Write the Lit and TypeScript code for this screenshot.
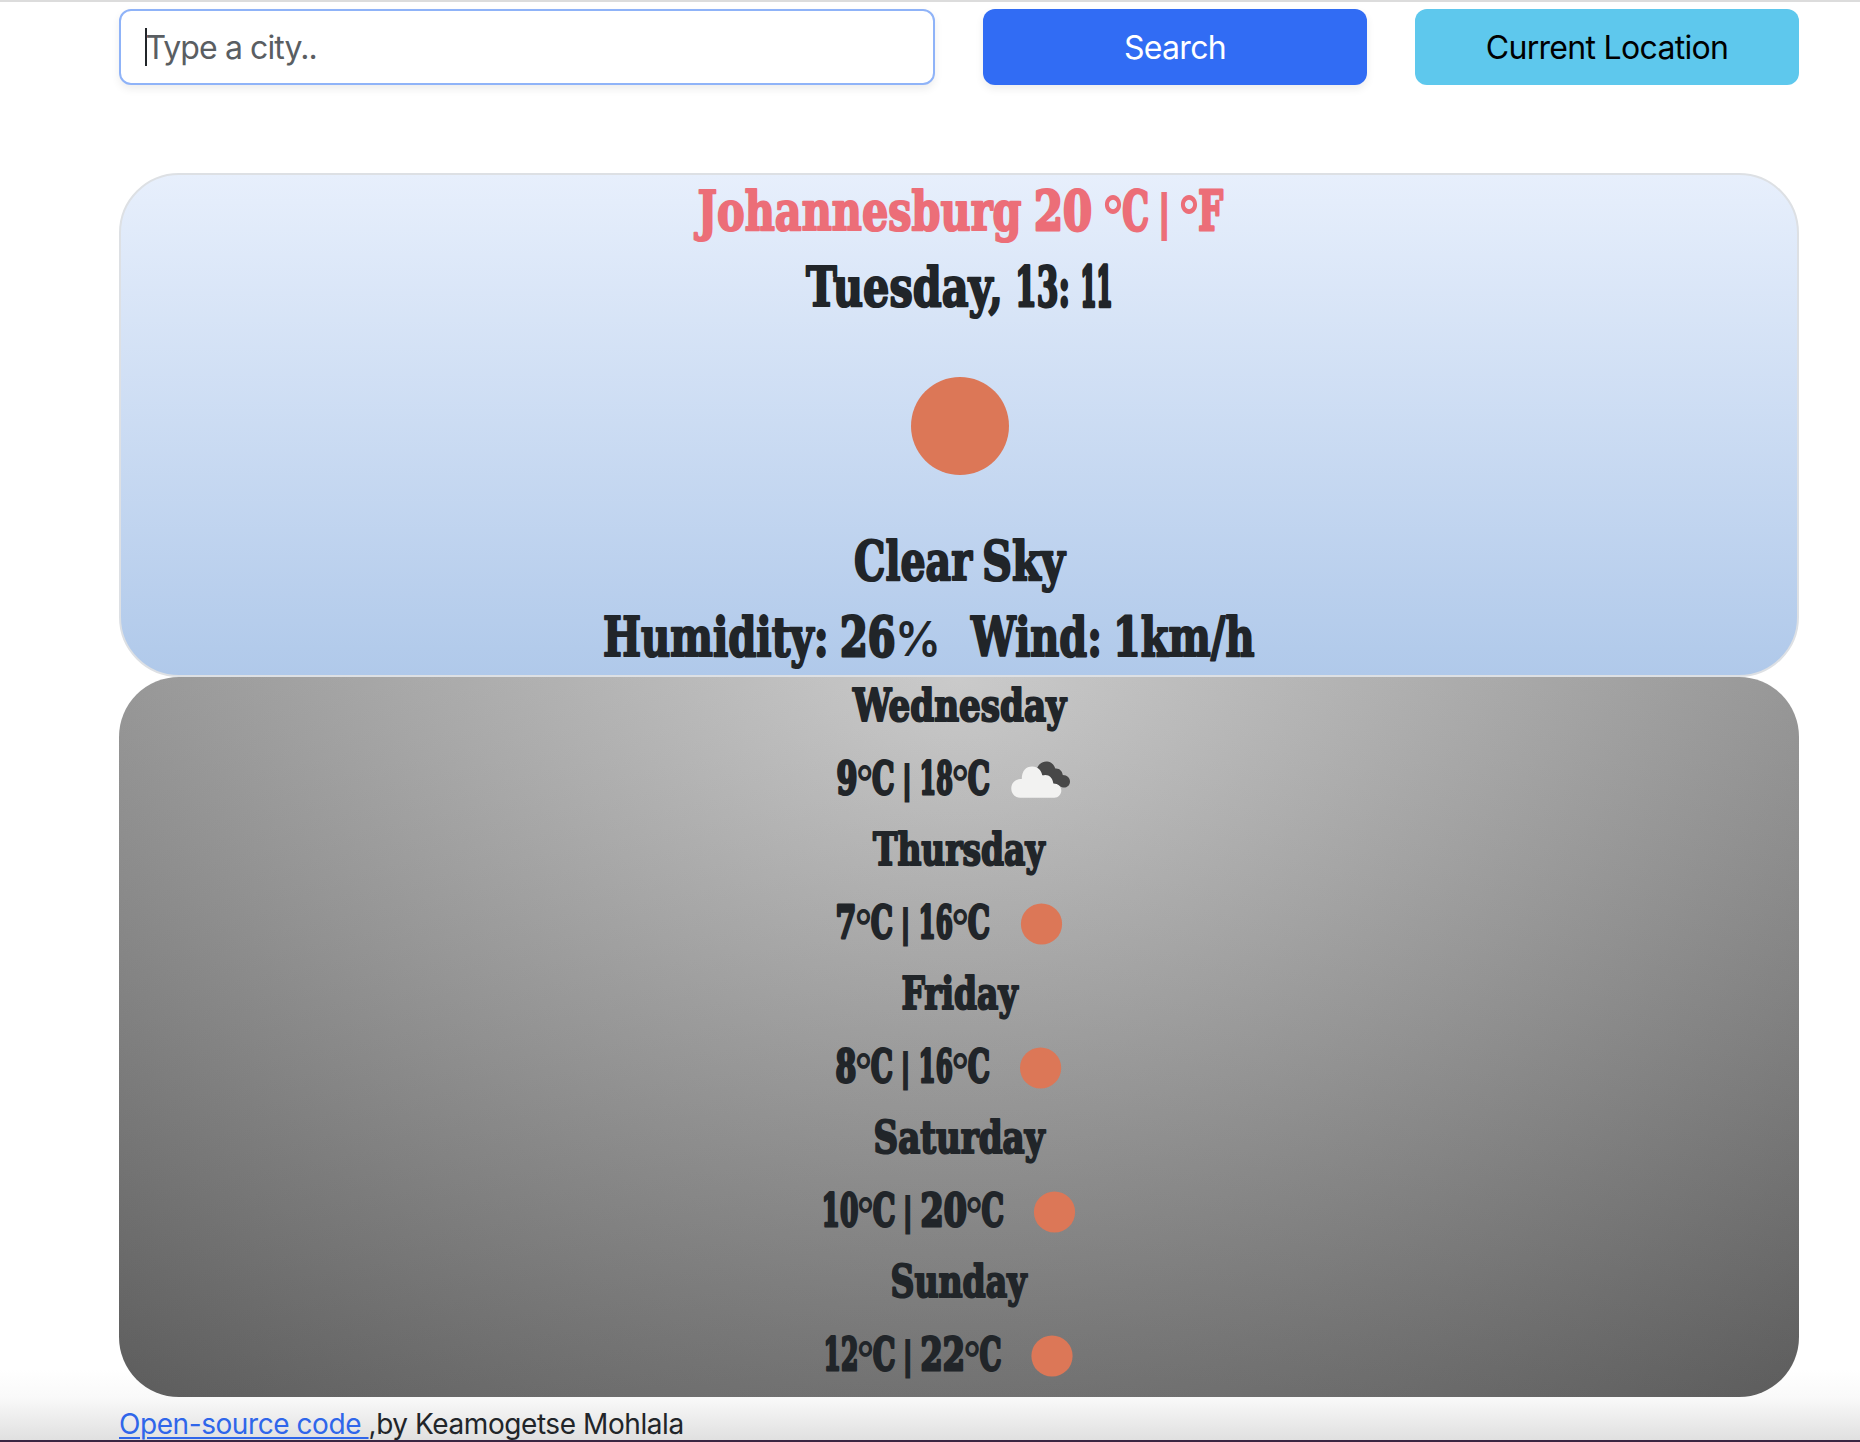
import { LitElement, html, svg, css } from "lit";
import { customElement, property } from "lit/decorators.js";

/** A run of display lettering: text, start, end (relative to the line's centre), and face. */
type Run = [string, number, number, ("sans" | "ring" | "bar")?];

@customElement("display-line")
class DisplayLine extends LitElement {
  @property({ attribute: false }) runs: Run[] = [];
  @property({ type: Number }) size = 55;
  @property({ type: Number }) height = 75;
  @property({ type: Number }) baseline = 55;
  @property() icon = "";
  @property({ type: Number }) iconX = 0;

  static styles = css`
    :host { display: block; }
    svg { display: block; width: 100%; overflow: visible; }
    text { font-family: "DejaVu Serif", serif; font-weight: 700; fill: currentColor; stroke: currentColor; stroke-width: 2.2px; stroke-linejoin: round; }
    .narrow { stroke-width: 3px; }
    .ones { stroke-width: 4.5px; }
    .sans { font-family: Inter, sans-serif; font-weight: 600; stroke: none; }
    .ring { font-weight: 500; }
    .bar { font-weight: 900; }
  `;

  private run([t, a, b, face]: Run) {
    const small = this.size < 50;
    if (face === "ring")
      return svg`<tspan class="sans ring" x=${a - 2} y=${this.baseline + (small ? 5 : 7)} font-size=${small ? 46 : 58} textLength=${b - a + 4} lengthAdjust="spacingAndGlyphs">${t}</tspan>`;
    if (face === "bar")
      return svg`<tspan class="sans bar" x=${a - 3} y=${this.baseline + (small ? 0.5 : 1)} font-size=${small ? 33 : 41} textLength=${b - a + 6} lengthAdjust="spacingAndGlyphs">${t}</tspan>`;
    if (face === "sans")
      return svg`<tspan class="sans" x=${a - 2} y=${this.baseline} font-size="48" textLength=${b - a + 4} lengthAdjust="spacingAndGlyphs">${t}</tspan>`;
    const cls = t === "11" ? "ones" : /^(\d+:?|C|F)$/.test(t) ? "narrow" : "";
    return svg`<tspan class=${cls} x=${a} y=${this.baseline} font-size=${this.size} textLength=${b - a} lengthAdjust="spacingAndGlyphs">${t}</tspan>`;
  }

  private glyph() {
    if (this.icon === "sun")
      return svg`<circle cx=${this.iconX} cy=${this.baseline - 14} r="20.6" fill="#dc7757"></circle>`;
    if (this.icon === "clouds")
      return svg`<g transform=${`translate(${this.iconX} ${this.baseline - 33})`}>
        <path fill="#484848" d="M25 9C27 3 31 0 36 0.500C40 1 43 4 44 7.500C48 7 51 10 51.500 14C56 14 58.700 17 58.700 20.500C58.700 24.500 55.500 27 51.500 26.500L40 22Z"></path>
        <path fill="#f2f2f1" d="M9 36.700C4 36.700 0 33 0 27.500C0 22 4 18 10.500 18C10.500 10 14.500 5.500 21 5.500C26.500 5.500 30 9 31 14.500C36 12.500 41.500 15.500 42 22.500C47 22.500 50 25.500 50 29.500C50 33.500 47 36.700 43 36.700Z"></path>
      </g>`;
    return "";
  }

  render() {
    return html`<svg viewBox=${`-840 0 1680 ${this.height}`} height=${this.height}>
      <text>${this.runs.map((r) => this.run(r))}</text>${this.glyph()}
    </svg>`;
  }
}

interface Day {
  name: Run;
  temps: Run[];
  icon: string;
  iconX: number;
}

const DAYS: Day[] = [
  { name: ["Wednesday", -106, 107], icon: "clouds", iconX: 52.3,
    temps: [["9", -122.5, -101.5], ["°", -101.2, -87.2, "ring"], ["C", -87, -64.5], ["|", -54, -50, "bar"], ["18", -39.5, -6.2], ["°", -6, 8.5, "ring"], ["C", 8.8, 31]] },
  { name: ["Thursday", -86, 85.5], icon: "sun", iconX: 82.5,
    temps: [["7", -123.5, -102.7], ["°", -102.5, -88.5, "ring"], ["C", -88.2, -66], ["|", -55.5, -51.5, "bar"], ["16", -40.5, -6.2], ["°", -6, 8.5, "ring"], ["C", 8.8, 31]] },
  { name: ["Friday", -57.5, 58.5], icon: "sun", iconX: 81.6,
    temps: [["8", -123.5, -102.7], ["°", -102.5, -88.5, "ring"], ["C", -88.2, -66], ["|", -55.5, -51.5, "bar"], ["16", -40.5, -6.2], ["°", -6, 8.5, "ring"], ["C", 8.8, 31]] },
  { name: ["Saturday", -85.5, 85.5], icon: "sun", iconX: 95.5,
    temps: [["10", -137.5, -100.7], ["°", -100.5, -86.5, "ring"], ["C", -86.2, -63.5], ["|", -53.3, -49.3, "bar"], ["20", -38.5, 7.8], ["°", 8, 22.2, "ring"], ["C", 22.5, 45]] },
  { name: ["Sunday", -68.5, 67.5], icon: "sun", iconX: 93,
    temps: [["12", -135.5, -100.7], ["°", -100.5, -86.5, "ring"], ["C", -86.2, -63.5], ["|", -53.3, -49.3, "bar"], ["22", -38.5, 5.8], ["°", 6, 20.2, "ring"], ["C", 20.5, 42.5]] },
];

@customElement("app-root")
class AppRoot extends LitElement {
  static styles = css`
    :host {
      display: block;
      box-sizing: border-box;
      height: 1442px;
      overflow: hidden;
      border-top: 2px solid #dcdcdc;
      border-bottom: 2px solid #3a2542;
      background: linear-gradient(#fff 1368px, #f9f9f9 1396px, #e0e0e0 1438px);
      font-family: Inter, sans-serif;
      color: #212529;
    }
    *, *::before { box-sizing: border-box; }
    .container { width: 1680px; margin-left: 119px; padding-top: 7px; }
    .search { display: grid; grid-template-columns: 816px 384px 384px; gap: 48px; height: 76px; }
    .field {
      display: flex; align-items: center; padding-left: 24px;
      border: 2px solid #8fb3f8; border-radius: 12px; background: #fff;
      box-shadow: 0 4px 8px rgba(0, 0, 0, 0.075);
      font-size: 32px; letter-spacing: -0.9px; color: #5a5e62;
    }
    .caret { width: 2px; height: 38px; margin-right: -1.5px; background: #212529; }
    .button {
      display: flex; align-items: center; justify-content: center;
      padding-top: 1px; border-radius: 12px; font-size: 32px; letter-spacing: -0.7px;
    }
    .primary { background: #316cf4; color: #fff; box-shadow: 0 4px 8px rgba(0, 0, 0, 0.075); }
    .info { background: #5ec8ed; color: #000; }
    .current {
      display: flex; flex-direction: column; align-items: stretch;
      margin-top: 88px; height: 504px; border: 2px solid #dde0e4; border-radius: 60px;
      background: linear-gradient(#e7effc, #b0c9ea);
    }
    .current display-line { margin: 0 -2px; }
    .city { color: #ec6e78; }
    .sun { display: flex; justify-content: center; align-items: center; height: 200px; padding: 2px 0 0 2px; }
    .disc { width: 98px; height: 98px; border-radius: 50%; background: #dc7757; }
    .forecast {
      height: 720px; border-radius: 60px;
      background:
        linear-gradient(to bottom, rgba(255, 255, 255, 0.15) 0%, rgba(0, 0, 0, 0.15) 100%),
        radial-gradient(at top center, rgba(255, 255, 255, 0.4) 0%, rgba(0, 0, 0, 0.4) 120%) #989898;
    }
    .footer { display: flex; margin-top: 9px; font-size: 28px; line-height: 36px; letter-spacing: -0.43px; white-space: pre; }
    .link { color: #2f66ea; text-decoration: underline; text-decoration-thickness: 2px; text-underline-offset: 3px; }
  `;

  render() {
    return html`
      <main class="container">
        <div class="search">
          <div class="field"><span class="caret"></span><span>Type a city..</span></div>
          <div class="button primary">Search</div>
          <div class="button info">Current Location</div>
        </div>
        <section class="current">
          <display-line class="city" .height=${75} .baseline=${55}
            .runs=${[["Johannesburg", -261.5, 62.5], ["20", 75, 133], ["°", 145, 163, "ring"], ["C", 163.2, 190], ["|", 202.5, 208, "bar"], ["°", 221, 239, "ring"], ["F", 239.2, 264]] as Run[]}></display-line>
          <display-line .height=${75} .baseline=${55.5}
            .runs=${[["Tuesday,", -153, 44], ["13:", 56, 111], ["11", 121.5, 153.5]] as Run[]}></display-line>
          <div class="sun"><div class="disc"></div></div>
          <display-line .height=${75} .baseline=${55}
            .runs=${[["Clear", -105, 13], ["Sky", 23, 106]] as Run[]}></display-line>
          <display-line .height=${75} .baseline=${55.5}
            .runs=${[["Humidity:", -356, -130.5], ["26", -119, -63.5], ["%", -62, -20, "sans"], ["Wind:", 12, 143], ["1km/h", 154, 295.5]] as Run[]}></display-line>
        </section>
        <section class="forecast">
          ${DAYS.map(
            (d) => html`
              <display-line .size=${44.5} .height=${72} .baseline=${44.3} .runs=${[d.name]}></display-line>
              <display-line .size=${44.5} .height=${72} .baseline=${45} .runs=${d.temps} .icon=${d.icon} .iconX=${d.iconX}></display-line>
            `
          )}
        </section>
        <div class="footer"><span class="link">Open-source code </span><span>,by Keamogetse Mohlala</span></div>
      </main>
    `;
  }
}
